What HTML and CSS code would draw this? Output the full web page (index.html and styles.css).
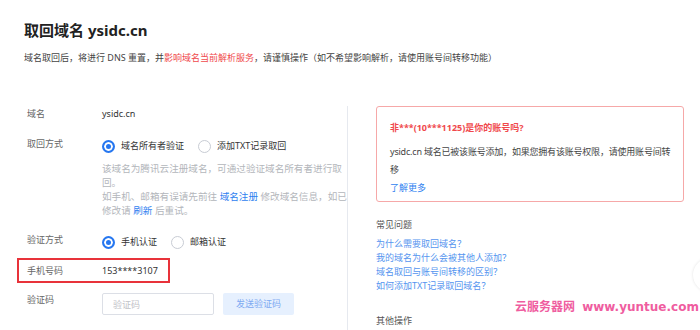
FILE: index.html
```html
<!DOCTYPE html>
<html lang="zh-CN">
<head>
    <meta charset="UTF-8">
    <title>取回域名</title>
    <link rel="stylesheet" href="styles.css">
</head>
<body>
    <div class="page">
        <h1 class="title">取回域名 ysidc.cn</h1>
        <p class="intro">域名取回后，将进行 DNS 重置，并<span class="warn">影响域名当前解析服务</span>，请谨慎操作（如不希望影响解析，请使用账号间转移功能）</p>

        <div class="main">
            <div class="form-col">
                <div class="row">
                    <div class="label">域名</div>
                    <div class="value">ysidc.cn</div>
                </div>
                <div class="row row-method">
                    <div class="label">取回方式</div>
                    <div class="field">
                        <div class="radios">
                            <span class="radio checked"></span><span class="radio-text">域名所有者验证</span>
                            <span class="radio"></span><span class="radio-text">添加TXT记录取回</span>
                        </div>
                        <p class="help">该域名为腾讯云注册域名，可通过验证域名所有者进行取回。<br>如手机、邮箱有误请先前往 <a href="#">域名注册</a> 修改域名信息，如已修改请 <a href="#">刷新</a> 后重试。</p>
                    </div>
                </div>
                <div class="row row-verify">
                    <div class="label">验证方式</div>
                    <div class="radios">
                        <span class="radio checked"></span><span class="radio-text">手机认证</span>
                        <span class="radio"></span><span class="radio-text">邮箱认证</span>
                    </div>
                </div>
                <div class="row row-phone">
                    <div class="label">手机号码</div>
                    <div class="value">153****3107</div>
                </div>
                <div class="row row-code">
                    <div class="label">验证码</div>
                    <input class="code-input" type="text" placeholder="验证码">
                    <button class="send-btn" type="button">发送验证码</button>
                </div>
            </div>

            <div class="side-col">
                <div class="alert">
                    <div class="alert-title">非***(10***1125)是你的账号吗?</div>
                    <p class="alert-text">ysidc.cn 域名已被该账号添加，如果您拥有该账号权限，请使用账号间转移</p>
                    <a class="alert-link" href="#">了解更多</a>
                </div>

                <div class="side-title">常见问题</div>
                <ul class="faq">
                    <li><a href="#">为什么需要取回域名？</a></li>
                    <li><a href="#">我的域名为什么会被其他人添加？</a></li>
                    <li><a href="#">域名取回与账号间转移的区别？</a></li>
                    <li><a href="#">如何添加TXT记录取回域名？</a></li>
                </ul>

                <div class="side-title other">其他操作</div>
            </div>
        </div>

        <div class="watermark">云服务器网 <span class="wm-url">www.yuntue.com</span></div>
        <div class="float-btn"></div>
    </div>
</body>
</html>
```

FILE: styles.css
```css
body {
    margin: 0;
    background: #fff;
    font-family: "Noto Sans", "Noto Sans CJK SC", sans-serif;
    font-size: 9px;
    color: #333;
}
.page {
    position: relative;
    width: 700px;
    height: 330px;
    overflow: hidden;
}
.title {
    margin: 0;
    padding: 20px 0 0 24px;
    font-size: 15px;
    line-height: 20px;
    font-weight: bold;
    color: #222;
}
.intro {
    margin: 0;
    padding: 11px 0 0 24px;
    line-height: 14px;
    color: #444;
}
.warn {
    color: #f0494c;
}
.main {
    display: flex;
    margin-top: 41px;
    padding-left: 17px;
}
.form-col {
    width: 331px;
    height: 225px;
    box-sizing: border-box;
    border-right: 1px solid #e6e9ef;
    padding-top: 1px;
}
.row {
    display: flex;
    align-items: flex-start;
    padding: 0 10px;
    line-height: 14px;
}
.label {
    width: 75px;
    flex-shrink: 0;
    color: #666;
}
.value {
    color: #333;
}
.row-method {
    margin-top: 16px;
}
.radios {
    display: flex;
    align-items: center;
    height: 18px;
    color: #333;
}
.radio {
    width: 11px;
    height: 11px;
    border: 1px solid #c8ccd4;
    border-radius: 50%;
    margin-right: 6px;
}
.radio.checked {
    width: 9px;
    height: 9px;
    border: 2px solid #2677f0;
    background: #2677f0;
    box-shadow: inset 0 0 0 2px #fff;
}
.radio-text {
    margin-right: 14px;
}
.help {
    margin: 7px 0 0;
    width: 247px;
    font-size: 9.6px;
    line-height: 14px;
    color: #b3b6bb;
}
.help a, .alert-link, .faq a {
    color: #2f7ff0;
    text-decoration: none;
}
.row-verify {
    margin-top: 15px;
}
.row-phone {
    margin-top: 7px;
    width: 153px;
    box-sizing: border-box;
    border: 2px solid #e8323a;
    padding: 4px 8px 3px;
}
.row-code {
    margin-top: 10px;
}
.code-input {
    width: 112px;
    height: 22px;
    box-sizing: border-box;
    border: 1px solid #dcdfe6;
    border-radius: 2px;
    padding: 0 10px;
    font: inherit;
    outline: none;
}
.code-input::placeholder {
    color: #bfc2c7;
}
.send-btn {
    margin-left: 9px;
    width: 71px;
    height: 22px;
    border: none;
    border-radius: 2px;
    background: #e6f0fe;
    color: #7eaaf2;
    font: inherit;
    padding: 0;
}
.side-col {
    width: 308px;
    padding-left: 28px;
}
.alert {
    height: 96px;
    box-sizing: border-box;
    border: 1px solid #f6a8a8;
    border-radius: 3px;
    padding: 14px 4px 0 13px;
}
.alert-title {
    line-height: 14px;
    color: #f0494c;
    font-weight: bold;
}
.alert-text {
    margin: 8px 0 0;
    line-height: 18px;
    letter-spacing: -0.2px;
    color: #444;
}
.alert-link {
    display: block;
    line-height: 18px;
}
.side-title {
    margin-top: 16px;
    line-height: 14px;
    color: #555;
}
.faq {
    list-style: none;
    margin: 5px 0 0;
    padding: 0;
    line-height: 14px;
}
.faq a {
    color: #5595ef;
}
.side-title.other {
    margin-top: 21px;
}
.watermark {
    position: absolute;
    left: 515px;
    top: 299px;
    color: #ef5d9f;
    font-size: 12px;
    font-weight: bold;
    line-height: 16px;
    white-space: nowrap;
}
.wm-url {
    font-family: "DejaVu Sans", sans-serif;
    margin-left: 4px;
}
.float-btn {
    position: absolute;
    left: 693px;
    top: 258px;
    width: 34px;
    height: 34px;
    border-radius: 50%;
    background: #fff;
    box-shadow: 0 0 3px rgba(0, 0, 0, 0.12);
}
```
